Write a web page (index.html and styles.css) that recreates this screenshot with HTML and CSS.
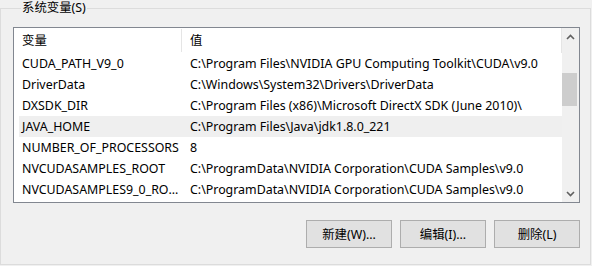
FILE: index.html
```html
<!DOCTYPE html>
<html>
<head>
  <title>系统变量</title>
  <meta charset="UTF-8" />
  <link rel="stylesheet" href="styles.css">
</head>
<body>

  <div class="group">
    <div class="group-title">系统变量(S)</div>

    <div class="listbox">
      <div class="list-main">
        <div class="list-head">
          <div class="cell col-name">变量</div>
          <div class="cell col-value">值</div>
        </div>
        <div class="row"><div class="cell col-name">CUDA_PATH_V9_0</div><div class="cell col-value">C:\Program Files\NVIDIA GPU Computing Toolkit\CUDA\v9.0</div></div>
        <div class="row"><div class="cell col-name">DriverData</div><div class="cell col-value">C:\Windows\System32\Drivers\DriverData</div></div>
        <div class="row"><div class="cell col-name">DXSDK_DIR</div><div class="cell col-value">C:\Program Files (x86)\Microsoft DirectX SDK (June 2010)\</div></div>
        <div class="row selected"><div class="cell col-name">JAVA_HOME</div><div class="cell col-value">C:\Program Files\Java\jdk1.8.0_221</div></div>
        <div class="row"><div class="cell col-name">NUMBER_OF_PROCESSORS</div><div class="cell col-value">8</div></div>
        <div class="row"><div class="cell col-name">NVCUDASAMPLES_ROOT</div><div class="cell col-value">C:\ProgramData\NVIDIA Corporation\CUDA Samples\v9.0</div></div>
        <div class="row"><div class="cell col-name">NVCUDASAMPLES9_0_ROOT</div><div class="cell col-value">C:\ProgramData\NVIDIA Corporation\CUDA Samples\v9.0</div></div>
      </div>

      <div class="scrollbar">
        <div class="sb-btn">
          <svg width="9" height="6" viewBox="0 0 9 6"><polyline points="1,5 4.5,1.5 8,5" fill="none" stroke="#606060" stroke-width="1.6"/></svg>
        </div>
        <div class="sb-track">
          <div class="sb-thumb" style="margin-top:28px;"></div>
        </div>
        <div class="sb-btn">
          <svg width="9" height="6" viewBox="0 0 9 6"><polyline points="1,1 4.5,4.5 8,1" fill="none" stroke="#606060" stroke-width="1.6"/></svg>
        </div>
      </div>
    </div>

    <div class="buttons">
      <button>新建(W)...</button>
      <button>编辑(I)...</button>
      <button>删除(L)</button>
    </div>
  </div>

</body>
</html>
```

FILE: styles.css
```css
body {
  margin: 0;
  background: #f0f0f0;
  font-family: "Segoe UI", "Microsoft YaHei UI", "Noto Sans", "Noto Sans CJK SC", sans-serif;
  font-size: 12.4px;
  color: #000;
}

.group {
  box-sizing: border-box;
  margin-top: 8px;
  width: 591px;
  height: 257px;
  border: 1px solid #dcdcdc;
  padding-left: 12px;
}

.group-title {
  width: fit-content;
  margin: -9px 0 0 8px;
  padding: 0 1px;
  height: 16px;
  line-height: 16px;
  background: #f0f0f0;
}

.listbox {
  box-sizing: border-box;
  margin-top: 11px;
  width: 567px;
  height: 176px;
  border: 1px solid #828790;
  background: #fff;
  display: flex;
}

.list-main {
  flex: 1;
  overflow: hidden;
}

.list-head {
  display: flex;
  height: 25px;
  align-items: center;
  border-right: 1px solid #e5e5e5;
  box-sizing: border-box;
}

.list-head .cell {
  height: 23px;
  line-height: 23px;
}

.list-head .col-name {
  border-right: 1px solid #e5e5e5;
}

.row {
  display: flex;
  height: 21px;
  line-height: 21px;
}

.row.selected {
  background: #efefef;
  margin-left: 5px;
}

.row.selected .col-name {
  width: 163px;
  padding-left: 3px;
}

.cell {
  box-sizing: border-box;
  white-space: nowrap;
  overflow: hidden;
  text-overflow: ellipsis;
}

.col-name {
  width: 168px;
  padding: 0 1px 0 8px;
}

.col-value {
  flex: 1;
  padding-left: 8px;
}

.scrollbar {
  width: 17px;
  background: #f0f0f0;
  display: flex;
  flex-direction: column;
}

.sb-btn {
  height: 17px;
  display: flex;
  align-items: center;
  justify-content: center;
}

.sb-track {
  flex: 1;
}

.sb-thumb {
  width: 15px;
  height: 33px;
  background: #cdcdcd;
}

.buttons {
  display: flex;
  gap: 8px;
  justify-content: flex-end;
  width: 567px;
  margin-top: 17px;
}

button {
  width: 86px;
  height: 28px;
  padding: 0;
  background: #e1e1e1;
  border: 1px solid #adadad;
  font: inherit;
  color: #000;
}
```
